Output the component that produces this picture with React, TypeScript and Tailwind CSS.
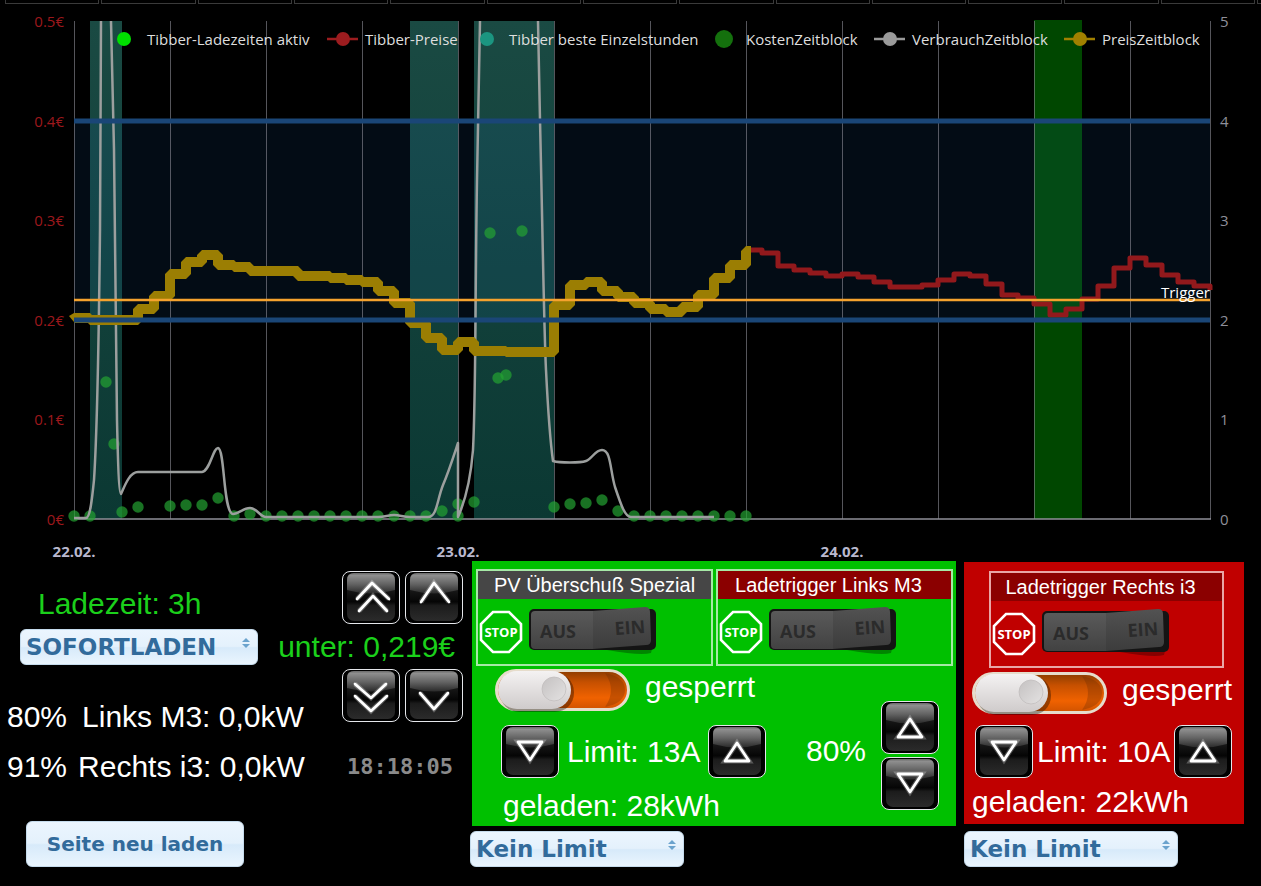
import type { ReactNode } from 'react';
import { clsx } from 'clsx';

const PLOT = { left: 74, right: 1210, top: 21, bottom: 519 };

const gridLines = [74, 170, 266, 362, 458, 554, 650, 746, 842, 938, 1034, 1130, 1210];

// [x, y] = start of each price step
const blockPrices = [
  [74, 318], [90, 320], [138, 309], [154, 296], [170, 274], [186, 262], [202, 255], [218, 265],
  [234, 267], [250, 271], [298, 276], [330, 278], [346, 280], [362, 282], [378, 291], [394, 303],
  [410, 323], [426, 338], [442, 350], [458, 342], [474, 351], [506, 352], [554, 305], [570, 285],
  [586, 282], [602, 291], [618, 297], [634, 303], [650, 309], [666, 312], [682, 307], [698, 295],
  [714, 278], [730, 265], [746, 251],
];

const prices = [
  [746, 250], [762, 253], [778, 266], [794, 270], [810, 273], [826, 276], [842, 274], [858, 277],
  [874, 282], [890, 287], [922, 285], [938, 280], [954, 274], [970, 276], [986, 284], [1002, 295],
  [1018, 298], [1034, 304], [1050, 315], [1066, 309], [1082, 299], [1098, 286], [1114, 268],
  [1130, 258], [1146, 265], [1162, 275], [1178, 282], [1194, 286], [1210, 290],
];

const costs = [
  [74, 516], [90, 516], [106, 382], [114, 444], [122, 512], [138, 507], [170, 506], [186, 505],
  [202, 505], [218, 498], [234, 516], [250, 514], [266, 516], [282, 516], [298, 516], [314, 516],
  [330, 516], [346, 516], [362, 516], [378, 516], [394, 516], [410, 516], [426, 516], [442, 511],
  [458, 504], [458, 516], [474, 502], [490, 233], [522, 231], [498, 378], [506, 375], [554, 507],
  [570, 504], [586, 503], [602, 500], [618, 511], [634, 516], [650, 516], [666, 516], [682, 516],
  [698, 516], [714, 516], [730, 516], [746, 516],
];

const legend = [
  { label: 'Tibber-Ladezeiten aktiv', dot: 124, text: 147, color: '#00e000', r: 7 },
  { label: 'Tibber-Preise', dot: 343, text: 365, color: '#9c1c1f', r: 7, line: true },
  { label: 'Tibber beste Einzelstunden', dot: 487, text: 509, color: '#1b9580', r: 7 },
  { label: 'KostenZeitblock', dot: 724, text: 746, color: '#14700d', r: 9 },
  { label: 'VerbrauchZeitblock', dot: 890, text: 912, color: '#9a9a9a', r: 7, line: true },
  { label: 'PreisZeitblock', dot: 1080, text: 1102, color: '#a18000', r: 7, line: true },
];

const stepPath = (points: number[][]) =>
  points.map(([x, y], i) => (i === 0 ? `M${x} ${y}` : `H${x}V${y}`)).join('');

const Chart = () => (
  <svg viewBox="0 5 1261 556" className="block h-auto w-full font-['Open_Sans',sans-serif] text-[15px]">
    <defs>
      <linearGradient id="band" x1="0" y1="0" x2="0" y2="1">
        <stop offset="0" stopColor="#1a4a43" />
        <stop offset="1" stopColor="#0b3833" />
      </linearGradient>
      <clipPath id="plot">
        <rect x="60" y="20" width="1152" height="502" />
      </clipPath>
    </defs>

    {[[90, 32], [410, 48], [474, 80]].map(([x, w]) => (
      <rect key={x} x={x} y={PLOT.top} width={w} height={PLOT.bottom - PLOT.top} fill="url(#band)" />
    ))}
    <rect x="1034" y="20" width="48" height="499" fill="#004700" />
    <rect x="74" y="121" width="1136" height="199" fill="#1e6ac0" fillOpacity="0.11" />

    <g stroke="#8d8d98" strokeOpacity="0.6">
      {gridLines.map((x) => (
        <line key={x} x1={x + 0.5} x2={x + 0.5} y1={PLOT.top} y2={PLOT.bottom} />
      ))}
    </g>
    <line x1="74" x2="1211" y1="519" y2="519" stroke="#8f8f99" strokeWidth="1.5" />

    <g fill="#24a332" fillOpacity="0.7">
      {costs.map(([x, y]) => (
        <circle key={`${x}-${y}`} cx={x} cy={y} r="5.7" />
      ))}
    </g>

    <g fill="none" stroke="#9c9f9e" strokeWidth="2.5" strokeLinejoin="round" clipPath="url(#plot)">
      <path d="M74 518L86 518C90 518 92 500 94 480C98 420 99 320 100 230L101 21" />
      <path d="M111 21L114 150C116 300 116 360 117 420C118 465 119 494 121 494C124 488 129 472 138 472H202C210 471 213 448 218 448C225 449 223 513 233 514C239 514 243 508 250 508C257 508 260 517 266 517H378C385 517 388 515 394 515C400 515 403 517 410 517H428C437 517 437 500 443 485C449 471 455 452 458 443V517C466 499 471 475 473 450C476 390 475 300 477 180L480 21" />
      <path d="M538 21L540 120C543 250 544 330 546 370C548 410 550 440 553 461C560 463 580 463 586 461C592 459 595 450 602 450C611 450 610 470 615 487C621 505 625 517 631 517H714" />
    </g>

    <path d={stepPath(prices)} fill="none" stroke="#92191c" strokeWidth="5" strokeLinejoin="round" />
    <path d={`${stepPath(blockPrices)}H751`} fill="none" stroke="#9b7e03" strokeWidth="10" strokeLinejoin="bevel" />
    <path d="M69 316L74 313V322Z" fill="#9b7e03" />

    <line x1="74" x2="1210" y1="121" y2="121" stroke="#1a4677" strokeWidth="5" />
    <line x1="74" x2="1210" y1="320" y2="320" stroke="#1a4677" strokeWidth="5" />
    <line x1="74" x2="1210" y1="300" y2="300" stroke="#f5a22e" strokeWidth="2.5" />
    <text x="1210" y="298" textAnchor="end" fill="#fff">Trigger</text>

    {[0.5, 0.4, 0.3, 0.2, 0.1, 0].map((v, i) => (
      <text key={v} x="64" y={27 + Math.round(i * 99.6)} textAnchor="end" fill="#9c181c">{v}€</text>
    ))}
    {[5, 4, 3, 2, 1, 0].map((v, i) => (
      <text key={v} x="1220" y={27 + Math.round(i * 99.6)} fill="#8f8f99">{v}</text>
    ))}
    {['22.02.', '23.02.', '24.02.'].map((d, i) => (
      <text key={d} x={74 + i * 384} y="557" textAnchor="middle" fontWeight="700" fill="#b9b8ce">{d}</text>
    ))}

    {legend.map((item) => (
      <g key={item.label}>
        {item.line && <line x1={item.dot - 16} x2={item.dot + 15} y1="39" y2="39" stroke={item.color} strokeWidth="2.5" />}
        <circle cx={item.dot} cy="39" r={item.r} fill={item.color} />
        <text x={item.text} y="45" fill="#dedede">{item.label}</text>
      </g>
    ))}
  </svg>
);

const glyphs = {
  doubleUp: 'M15 28L30 12L47 28M17 40L31 25L45 40',
  up: 'M16 31L29 12L44 31',
  doubleDown: 'M13 15L29 29L44 15M13 27L29 42L45 27',
  down: 'M15 24L29 40L43 24',
  triangleDown: 'M17 17H41L29 35Z',
  triangleUp: 'M17 36H41L29 18Z',
};

const GlossButton = ({ glyph, label }: { glyph: keyof typeof glyphs; label: string }) => (
  <button aria-label={label} className="h-[53px] w-[58px] shrink-0 overflow-hidden rounded-lg border border-gray-200 bg-black">
    <svg viewBox="1 1 56 51" className="size-full">
      <rect x="5" y="2" width="48" height="48" rx="7" fill="url(#face)" />
      <path d="M5 9Q5 2 12 2H46Q53 2 53 9V19Q29 26 5 19Z" fill="url(#gloss)" />
      <path d={glyphs[glyph]} fill="none" stroke="#fff" strokeOpacity="0.25" strokeWidth="5" />
      <path d={glyphs[glyph]} fill="none" stroke="#fff" strokeWidth="2.8" strokeLinecap="round" strokeLinejoin="round" />
    </svg>
  </button>
);

const StopSign = () => (
  <svg viewBox="0 0 44 44" className="size-11 shrink-0">
    <path d="M14 2H30L42 14V30L30 42H14L2 30V14Z" fill="none" stroke="#fff" strokeWidth="2.6" />
    <text x="22" y="27" textAnchor="middle" fill="#fff" fontWeight="700" className="font-['Open_Sans',sans-serif] text-[13px]">STOP</text>
  </svg>
);

const Rocker = ({ label }: { label: string }) => (
  <button aria-label={label} className="shrink-0">
    <svg viewBox="0 0 128 50" className="h-[50px] w-32">
      <path d="M78 42L124 38L122 46Q112 49 78 43Z" fill="#000" fillOpacity="0.3" />
      <rect x="0" y="2" width="127" height="41" rx="5" fill="#141414" />
      <path d="M6 4H64V42H6Q2 42 2 38V8Q2 4 6 4Z" fill="url(#rockerLeft)" />
      <path d="M64 4L116 0Q121 0 121 5L122 33Q122 38 117 38L64 42Z" fill="url(#rockerRight)" />
      <g fontWeight="700" fill="#2b2b2b" className="font-['Open_Sans',sans-serif] text-[18px]">
        <text x="11" y="31">AUS</text>
        <text x="86" y="28" transform="rotate(-4 86 28)">EIN</text>
      </g>
    </svg>
  </button>
);

const LockToggle = () => (
  <label className="relative flex gap-[15px] text-[30px]/9">
    <input type="checkbox" className="sr-only" />
    <svg viewBox="0 0 135 44" className="h-11 w-[135px] shrink-0">
      <rect x="1.5" y="1.5" width="132" height="39" rx="19.5" fill="url(#orange)" stroke="#e6dccb" strokeWidth="3" />
      <path d="M110 4Q130 8 130 21T110 38Q122 21 110 4Z" fill="#6b2c00" fillOpacity="0.3" />
      <rect x="5" y="4" width="74" height="39" rx="19" fill="#000" fillOpacity="0.35" />
      <rect x="3" y="2" width="73" height="38" rx="19" fill="url(#knob)" />
      <circle cx="59" cy="20" r="12" fill="url(#dimple)" stroke="#c2bebe" strokeWidth="0.8" />
    </svg>
    gesperrt
  </label>
);

const TriggerBox = ({ title, dark }: { title: string; dark?: boolean }) => (
  <section className="h-[97px] flex-1 border-2 border-white/65">
    <h2 className={clsx('h-7 text-center text-[20px]/7', dark ? 'bg-[#464646]' : 'bg-[#8b0000] pr-3')}>{title}</h2>
    <div className="flex items-center gap-1.5 px-px pt-2">
      <StopSign />
      <Rocker label={title} />
    </div>
  </section>
);

const Select = ({ label, value, className }: { label: string; value: string; className?: string }) => (
  <div className={clsx('relative h-9', className)}>
    <select
      aria-label={label}
      className="size-full appearance-none rounded-md border border-[#c5dbec] bg-[linear-gradient(#ebf5fe,#e4f1fc_48%,#d7eafa_52%,#eaf5fe)] pl-[5px] font-['DejaVu_Sans',sans-serif] text-[23px] font-bold text-[#326b9b]"
    >
      <option>{value}</option>
    </select>
    <svg viewBox="0 0 8 10" className="pointer-events-none absolute top-[9px] right-2 h-2.5 w-2" fill="#6ba3cd">
      <path d="M4 0L8 4H0ZM0 6H8L4 10Z" />
    </svg>
  </div>
);

const Limit = ({ children, className }: { children: ReactNode; className?: string }) => (
  <div className={clsx('flex items-center', className)}>
    <GlossButton glyph="triangleDown" label="Limit verringern" />
    <span className="whitespace-nowrap">{children}</span>
    <GlossButton glyph="triangleUp" label="Limit erhöhen" />
  </div>
);

const SharedGradients = () => (
  <svg className="absolute size-0" aria-hidden="true">
    <defs>
      <linearGradient id="face" x1="0" y1="0" x2="0" y2="1">
        <stop offset="0" stopColor="#333" />
        <stop offset="0.6" stopColor="#050505" />
        <stop offset="0.68" stopColor="#1c1c1c" />
        <stop offset="1" stopColor="#2b2b2b" />
      </linearGradient>
      <linearGradient id="gloss" x1="0" y1="0" x2="0" y2="1">
        <stop offset="0" stopColor="#6a6a6a" />
        <stop offset="0.12" stopColor="#8e8e8e" />
        <stop offset="0.55" stopColor="#626262" />
        <stop offset="1" stopColor="#2a2a2a" />
      </linearGradient>
      <linearGradient id="rockerLeft" x1="0" y1="0" x2="0" y2="1">
        <stop offset="0" stopColor="#5a5a5a" />
        <stop offset="1" stopColor="#424242" />
      </linearGradient>
      <linearGradient id="rockerRight" x1="0" y1="0" x2="0" y2="1">
        <stop offset="0" stopColor="#525252" />
        <stop offset="1" stopColor="#3c3c3c" />
      </linearGradient>
      <linearGradient id="orange" x1="0" y1="0" x2="0" y2="1">
        <stop offset="0" stopColor="#8a3c00" />
        <stop offset="0.3" stopColor="#c65000" />
        <stop offset="0.7" stopColor="#f06200" />
        <stop offset="1" stopColor="#cf5200" />
      </linearGradient>
      <linearGradient id="knob" x1="0" y1="0" x2="0" y2="1">
        <stop offset="0" stopColor="#f4f2f2" />
        <stop offset="1" stopColor="#cfcbcb" />
      </linearGradient>
      <linearGradient id="dimple" x1="0" y1="0" x2="1" y2="1">
        <stop offset="0" stopColor="#c4c1c1" />
        <stop offset="1" stopColor="#e4e2e2" />
      </linearGradient>
    </defs>
  </svg>
);

export default function App() {
  return (
    <main className="relative min-h-screen overflow-hidden bg-black font-['Liberation_Sans',Arial,sans-serif] text-[30px]/[30px] text-white">
      <SharedGradients />
      <div className="flex h-[5px] gap-[2px] pb-px pl-[5px]">
        {Array.from({ length: 13 }, (_, i) => (
          <div key={i} className="flex-1 border-x border-b border-[#3a3a3a]" />
        ))}
        <div className="w-1 border-b border-l border-[#3a3a3a]" />
      </div>

      <Chart />

      <div className="grid grid-cols-[470fr_486fr_305fr]">
        <div className="flex flex-col pt-2.5 pr-[7px]">
          <div className="flex items-center justify-between">
            <span className="pt-3 pl-[38px] text-[#1bd01b]">Ladezeit: 3h</span>
            <div className="flex gap-[5px]">
              <GlossButton glyph="doubleUp" label="Preis stark erhöhen" />
              <GlossButton glyph="up" label="Preis erhöhen" />
            </div>
          </div>
          <div className="flex h-[45px] items-center justify-between pr-2 pl-5">
            <Select label="Lademodus" value="SOFORTLADEN" className="w-[238px]" />
            <span className="text-[#1bd01b]">unter: 0,219€</span>
          </div>
          <div className="flex h-[63px] justify-between">
            <p className="flex gap-[15px] self-end pl-[7px]">
              <span>80%</span>
              <span>Links M3: 0,0kW</span>
            </p>
            <div className="flex gap-[5px]">
              <GlossButton glyph="doubleDown" label="Preis stark senken" />
              <GlossButton glyph="down" label="Preis senken" />
            </div>
          </div>
          <div className="flex h-[69px] items-center justify-between pr-2.5">
            <p className="flex gap-[11px] pl-[7px]">
              <span>91%</span>
              <span>Rechts i3: 0,0kW</span>
            </p>
            <time className="font-['DejaVu_Sans_Mono',monospace] text-[22px] font-bold text-[#8a8a8a]">18:18:05</time>
          </div>
          <button className="mt-5 ml-[26px] h-[46px] w-[218px] rounded-md border border-[#c5dbec] bg-[linear-gradient(#ebf5fe,#e4f1fc_48%,#d7eafa_52%,#eaf5fe)] font-['DejaVu_Sans',sans-serif] text-[20px] font-bold text-[#326b9b]">
            Seite neu laden
          </button>
        </div>

        <div className="flex flex-col gap-[5px]">
          <div className="ml-0.5 h-[265px] bg-[#00c000] pt-2">
            <div className="flex gap-[3px] pr-[3px] pl-1">
              <TriggerBox title="PV Überschuß Spezial" dark />
              <TriggerBox title="Ladetrigger Links M3" />
            </div>
            <div className="flex items-center pt-[3px] pr-[17px]">
              <div className="flex flex-col pl-[23px]">
                <LockToggle />
                <Limit className="mt-3 gap-2 pl-1.5">Limit: 13A</Limit>
                <p className="pt-[13px] pl-2">geladen: 28kWh</p>
              </div>
              <span className="mt-3 ml-auto pr-[15px]">80%</span>
              <div className="mt-5 flex flex-col gap-[3px]">
                <GlossButton glyph="triangleUp" label="Ladeziel erhöhen" />
                <GlossButton glyph="triangleDown" label="Ladeziel verringern" />
              </div>
            </div>
          </div>
          <Select label="Limit Links M3" value="Kein Limit" className="w-[214px]" />
        </div>

        <div className="flex flex-col gap-[7px] pt-px pr-[17px] pl-2">
          <div className="h-[262px] bg-[#c00000] pt-[9px]">
            <div className="flex pr-5 pl-[25px]">
              <TriggerBox title="Ladetrigger Rechts i3" />
            </div>
            <div className="flex flex-col pt-1 pl-2">
              <LockToggle />
              <Limit className="mt-[9px] gap-1 pl-[3px]">Limit: 10A</Limit>
              <p className="pt-[9px]">geladen: 22kWh</p>
            </div>
          </div>
          <Select label="Limit Rechts i3" value="Kein Limit" className="w-[214px]" />
        </div>
      </div>
    </main>
  );
}
